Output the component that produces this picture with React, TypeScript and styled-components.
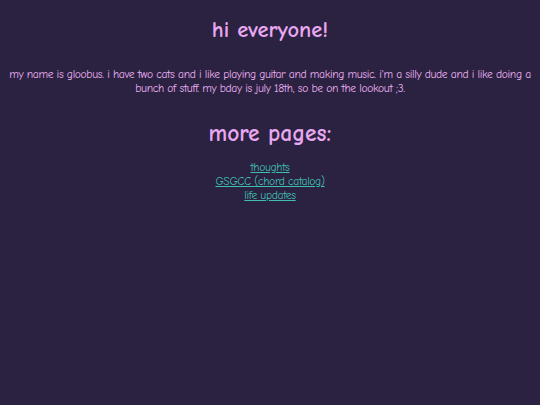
import React from "react";
import styled, { createGlobalStyle } from "styled-components";

const Global = createGlobalStyle`
  html, body {
    margin: 0;
    padding: 0;
    background: #2b2140;
  }
  body {
    font-family: "Comic Sans MS", "Comic Neue", "Chalkboard SE", cursive, sans-serif;
  }
`;

const Page = styled.main`
  min-height: 405px;
  box-sizing: border-box;
  padding: 16px 8px;
  display: flex;
  flex-direction: column;
  align-items: center;
  text-align: center;
  color: #e8a8f0;
`;

const Heading = styled.h1`
  margin: 0;
  font-size: 22.5px;
  line-height: 28px;
  font-weight: 900;
  color: #e8a8f0;
`;

const Intro = styled.p`
  margin: 24px 0 0;
  font-size: 11.6px;
  letter-spacing: -0.36px;
  line-height: 14px;
  color: #e8b0f0;
`;

const SubHeading = styled.h2`
  margin: 24px 0 0;
  font-size: 23.5px;
  line-height: 28px;
  font-weight: 900;
  color: #e8a8f0;
`;

const Links = styled.nav`
  margin-top: 13px;
  display: flex;
  flex-direction: column;
  align-items: center;
`;

const PageLink = styled.a`
  font-size: 11.6px;
  letter-spacing: -0.36px;
  line-height: 14px;
  color: #3fbfb0;
  text-decoration: underline;
`;

export default function App() {
  return (
    <>
      <Global />
      <Page>
        <Heading>hi everyone!</Heading>
        <Intro>
          my name is gloobus. i have two cats and i like playing guitar and making music. i'm a silly dude and i like doing a bunch of stuff. my bday is july 18th, so be on the lookout ;3.
        </Intro>
        <SubHeading>more pages:</SubHeading>
        <Links>
          <PageLink href="#">thoughts</PageLink>
          <PageLink href="#">GSGCC (chord catalog)</PageLink>
          <PageLink href="#">life updates</PageLink>
        </Links>
      </Page>
    </>
  );
}
